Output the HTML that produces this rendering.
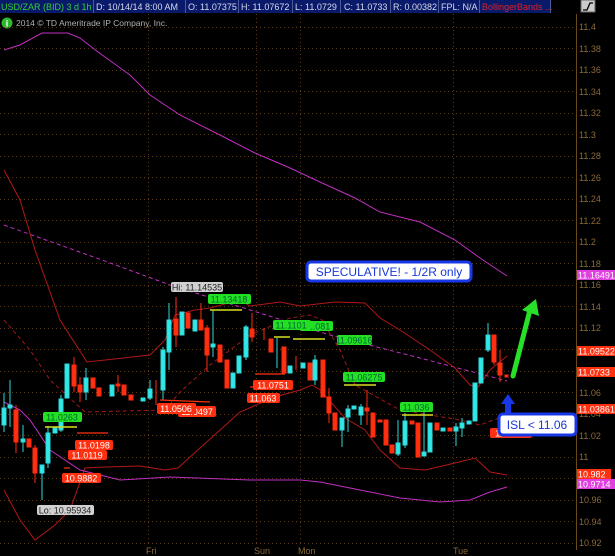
<!DOCTYPE html>
<html><head><meta charset="utf-8"><style>
html,body{margin:0;padding:0;background:#000;width:615px;height:556px;overflow:hidden}
svg{display:block;font-family:"Liberation Sans",sans-serif}
</style></head><body>
<svg width="615" height="556" viewBox="0 0 615 556" xmlns="http://www.w3.org/2000/svg">
<rect width="615" height="556" fill="#000"/>
<!-- top bar -->
<rect x="0" y="0" width="550" height="13" fill="#0a1a6a"/>
<g stroke="#4a5a9a" stroke-width="1">
<line x1="93.5" y1="0" x2="93.5" y2="13"/><line x1="185.5" y1="0" x2="185.5" y2="13"/><line x1="238.5" y1="0" x2="238.5" y2="13"/><line x1="292.5" y1="0" x2="292.5" y2="13"/><line x1="340.5" y1="0" x2="340.5" y2="13"/><line x1="390.5" y1="0" x2="390.5" y2="13"/><line x1="438.5" y1="0" x2="438.5" y2="13"/><line x1="479.5" y1="0" x2="479.5" y2="13"/><line x1="550.5" y1="0" x2="550.5" y2="13"/>
</g>
<g font-size="9" fill="#d8d8e8">
<text x="1" y="10" fill="#30d030">USD/ZAR (BID) 3 d 1h</text>
<text x="96" y="10">D: 10/14/14 8:00 AM</text>
<text x="188" y="10">O: 11.07375</text>
<text x="241" y="10">H: 11.07672</text>
<text x="295" y="10">L: 11.0729</text>
<text x="344" y="10">C: 11.0733</text>
<text x="393" y="10">R: 0.00382</text>
<text x="441" y="10">FPL: N/A</text>
<text x="482" y="10" fill="#e02020">BollingerBands ...</text>
</g>
<rect x="581" y="0" width="14" height="12" fill="#ccc" stroke="#666"/>
<path d="M583 10 L587 10 L590 3 L593 3" stroke="#000" fill="none" stroke-width="1.3"/>
<circle cx="7" cy="23" r="5.5" fill="#2db82d"/><text x="7" y="26.5" font-size="9" fill="#fff" text-anchor="middle" font-weight="bold">i</text>
<text x="16" y="26" font-size="8.5" fill="#b0b0b0">2014 © TD Ameritrade IP Company, Inc.</text>
<!-- grid -->
<g stroke="#5a3c10" stroke-width="1" stroke-dasharray="1,3">
<line x1="0" x2="575" y1="27.5" y2="27.5"/><line x1="0" x2="575" y1="48.5" y2="48.5"/><line x1="0" x2="575" y1="70.5" y2="70.5"/><line x1="0" x2="575" y1="91.5" y2="91.5"/><line x1="0" x2="575" y1="113.5" y2="113.5"/><line x1="0" x2="575" y1="134.5" y2="134.5"/><line x1="0" x2="575" y1="156.5" y2="156.5"/><line x1="0" x2="575" y1="177.5" y2="177.5"/><line x1="0" x2="575" y1="199.5" y2="199.5"/><line x1="0" x2="575" y1="220.5" y2="220.5"/><line x1="0" x2="575" y1="242.5" y2="242.5"/><line x1="0" x2="575" y1="263.5" y2="263.5"/><line x1="0" x2="575" y1="285.5" y2="285.5"/><line x1="0" x2="575" y1="306.5" y2="306.5"/><line x1="0" x2="575" y1="328.5" y2="328.5"/><line x1="0" x2="575" y1="349.5" y2="349.5"/><line x1="0" x2="575" y1="371.5" y2="371.5"/><line x1="0" x2="575" y1="392.5" y2="392.5"/><line x1="0" x2="575" y1="414.5" y2="414.5"/><line x1="0" x2="575" y1="435.5" y2="435.5"/><line x1="0" x2="575" y1="457.5" y2="457.5"/><line x1="0" x2="575" y1="478.5" y2="478.5"/><line x1="0" x2="575" y1="500.5" y2="500.5"/><line x1="0" x2="575" y1="521.5" y2="521.5"/><line x1="0" x2="575" y1="543.5" y2="543.5"/>
<line x1="148.5" x2="148.5" y1="14" y2="545"/><line x1="256.5" x2="256.5" y1="14" y2="545"/><line x1="300.5" x2="300.5" y1="14" y2="545"/><line x1="453.5" x2="453.5" y1="14" y2="545"/>
</g>
<line x1="576.5" y1="14" x2="576.5" y2="550" stroke="#6a4a18"/>
<g font-size="9" fill="#8a6a38">
<text x="579" y="30">11.4</text><text x="579" y="52">11.38</text><text x="579" y="73">11.36</text><text x="579" y="95">11.34</text><text x="579" y="116">11.32</text><text x="579" y="138">11.3</text><text x="579" y="159">11.28</text><text x="579" y="181">11.26</text><text x="579" y="202">11.24</text><text x="579" y="224">11.22</text><text x="579" y="245">11.2</text><text x="579" y="267">11.18</text><text x="579" y="288">11.16</text><text x="579" y="310">11.14</text><text x="579" y="331">11.12</text><text x="579" y="353">11.1</text><text x="579" y="374">11.08</text><text x="579" y="396">11.06</text><text x="579" y="417">11.04</text><text x="579" y="439">11.02</text><text x="579" y="460">11</text><text x="579" y="482">10.98</text><text x="579" y="503">10.96</text><text x="579" y="525">10.94</text><text x="579" y="546">10.92</text>
<text x="146" y="554">Fri</text><text x="254" y="554">Sun</text><text x="298" y="554">Mon</text><text x="453" y="554">Tue</text>
</g>
<!-- bands -->
<g fill="none" stroke-width="1">
<polyline stroke="#c030c0" points="4,50 20,45 42,33 68,33 80,38 98,52 130,75 150,95 180,115 220,135 255,153 290,168 320,182 355,198 380,212 420,222 455,240 480,258 507,276"/>
<polyline stroke="#c030c0" stroke-dasharray="4,3" points="4,225 60,245 102,260 170,285 250,310 330,335 420,358 507,381"/>
<polyline stroke="#b01818" points="4,170 20,200 35,250 60,320 87,362 150,355 165,340 175,315 195,310 210,308 240,300 250,306 280,302 300,306 335,302 365,303 380,318 400,330 430,350 455,368 470,385 478,387 490,370 507,356"/>
<polyline stroke="#b01818" points="4,490 20,520 35,540 55,525 70,510 85,468 105,467 140,466 165,470 178,468 200,448 240,412 275,397 300,390 312,385 320,390 345,418 365,430 380,450 400,468 425,470 455,463 475,458 490,472 507,475"/>
<polyline stroke="#c030c0" points="4,402 20,410 30,420 50,450 80,470 120,480 170,477 250,480 300,480 320,482 360,490 400,498 440,502 470,500 490,492 507,487"/>
<polyline stroke="#a01818" stroke-dasharray="4,3" points="4,320 30,350 50,380 85,412 165,410 180,392 210,365 250,335 290,318 310,315 322,320 340,350 355,385 400,410 430,415 460,420 480,425 507,415"/>
</g>
<!-- candles cyan -->
<g stroke="#30d8d8" fill="#30e8e8">
<line x1="4" y1="393" x2="4" y2="432"/><rect x="2" y="408" width="4" height="17"/>
<line x1="10" y1="380" x2="10" y2="427"/><rect x="8" y="405" width="4" height="3"/>
<line x1="23" y1="425" x2="23" y2="452"/><rect x="21" y="439" width="4" height="3"/>
<line x1="42" y1="465" x2="42" y2="500"/><rect x="40" y="465" width="4" height="8"/>
<line x1="48" y1="426" x2="48" y2="468"/><rect x="46" y="433" width="4" height="30"/>
<rect x="53" y="428" width="4" height="5"/>
<line x1="61" y1="395" x2="61" y2="432"/><rect x="59" y="399" width="4" height="31"/>
<rect x="65" y="364" width="4" height="34"/>
<line x1="86" y1="368" x2="86" y2="400"/><rect x="84" y="378" width="4" height="14"/>
<rect x="110" y="385" width="4" height="11"/>
<rect x="141" y="398" width="4" height="3"/>
<line x1="150" y1="380" x2="150" y2="400"/><rect x="148" y="389" width="4" height="9"/>
<line x1="163" y1="347" x2="163" y2="400"/><rect x="161" y="350" width="4" height="40"/>
<line x1="169" y1="303" x2="169" y2="370"/><rect x="167" y="320" width="4" height="32"/>
<rect x="180" y="312" width="4" height="23"/>
<rect x="193" y="320" width="4" height="11"/>
<line x1="213" y1="310" x2="213" y2="357"/><rect x="211" y="344" width="4" height="3"/>
<rect x="231" y="373" width="4" height="15"/>
<rect x="237" y="356" width="4" height="17"/>
<line x1="246" y1="325" x2="246" y2="360"/><rect x="244" y="327" width="4" height="30"/>
<line x1="277" y1="338" x2="277" y2="368"/>
<rect x="288" y="366" width="4" height="7"/>
<rect x="301" y="363" width="4" height="5"/>
<line x1="315" y1="355" x2="315" y2="385"/><rect x="313" y="360" width="4" height="20"/>
<line x1="342" y1="418" x2="342" y2="447"/><rect x="340" y="418" width="4" height="12"/>
<line x1="348" y1="405" x2="348" y2="432"/><rect x="346" y="409" width="4" height="8"/>
<rect x="352" y="406" width="4" height="3"/>
<line x1="361" y1="404" x2="361" y2="425"/><rect x="359" y="407" width="4" height="8"/>
<line x1="398" y1="420" x2="398" y2="456"/><rect x="396" y="443" width="4" height="11"/>
<line x1="405" y1="413" x2="405" y2="448"/><rect x="403" y="421" width="4" height="24"/>
<line x1="424" y1="412" x2="424" y2="456"/><rect x="422" y="452" width="4" height="4"/>
<rect x="428" y="423" width="4" height="29"/>
<rect x="441" y="428" width="4" height="3"/>
<line x1="456" y1="423" x2="456" y2="446"/><rect x="454" y="427" width="4" height="4"/>
<line x1="462" y1="418" x2="462" y2="437"/><rect x="460" y="423" width="4" height="5"/>
<rect x="467" y="421" width="4" height="3"/>
<rect x="473" y="383" width="4" height="38"/>
<rect x="479" y="358" width="4" height="25"/>
<line x1="488" y1="323" x2="488" y2="352"/><rect x="486" y="335" width="4" height="15"/>
</g>
<!-- candles red -->
<g stroke="#ff2a10" fill="#ff3010">
<line x1="16" y1="405" x2="16" y2="453"/><rect x="14" y="410" width="4" height="32"/>
<rect x="27" y="439" width="4" height="8"/>
<line x1="35" y1="445" x2="35" y2="483"/><rect x="33" y="448" width="4" height="25"/>
<line x1="74" y1="357" x2="74" y2="392"/><rect x="72" y="365" width="4" height="21"/>
<line x1="80" y1="377" x2="80" y2="402"/><rect x="78" y="385" width="4" height="7"/>
<rect x="91" y="378" width="4" height="10"/>
<rect x="97" y="388" width="4" height="8"/>
<line x1="118" y1="375" x2="118" y2="392"/><rect x="116" y="384" width="4" height="2"/>
<rect x="122" y="385" width="4" height="10"/>
<rect x="129" y="395" width="4" height="5"/>
<line x1="156" y1="380" x2="156" y2="405"/>
<line x1="176" y1="297" x2="176" y2="347"/><rect x="174" y="319" width="4" height="16"/>
<rect x="186" y="313" width="4" height="15"/>
<line x1="201" y1="303" x2="201" y2="330"/><rect x="199" y="320" width="4" height="10"/>
<line x1="207" y1="325" x2="207" y2="372"/><rect x="205" y="328" width="4" height="27"/>
<rect x="218" y="345" width="4" height="17"/>
<rect x="225" y="360" width="4" height="28"/>
<line x1="252" y1="313" x2="252" y2="342"/><rect x="250" y="329" width="4" height="8"/>
<line x1="264" y1="328" x2="264" y2="340"/>
<rect x="269" y="339" width="4" height="13"/>
<rect x="282" y="347" width="4" height="26"/>
<line x1="296" y1="356" x2="296" y2="370"/>
<rect x="308" y="363" width="4" height="17"/>
<rect x="321" y="360" width="4" height="37"/>
<line x1="329" y1="388" x2="329" y2="423"/><rect x="327" y="397" width="4" height="16"/>
<rect x="333" y="413" width="4" height="17"/>
<line x1="367" y1="390" x2="367" y2="425"/><rect x="365" y="408" width="4" height="3"/>
<rect x="371" y="413" width="4" height="24"/>
<rect x="378" y="420" width="4" height="2"/>
<rect x="384" y="420" width="4" height="25"/>
<rect x="390" y="445" width="4" height="8"/>
<rect x="410" y="421" width="4" height="3"/>
<rect x="416" y="423" width="4" height="34"/>
<rect x="435" y="423" width="4" height="7"/>
<rect x="448" y="428" width="4" height="3"/>
<line x1="494" y1="335" x2="494" y2="365"/><rect x="492" y="335" width="4" height="27"/>
<line x1="500" y1="350" x2="500" y2="382"/><rect x="498" y="363" width="4" height="12"/>
<rect x="505" y="375" width="3" height="2"/>
</g>
<!-- yellow lines -->
<g stroke="#d8e020" stroke-width="1.5">
<line x1="45" y1="427" x2="77" y2="427"/><line x1="210" y1="310" x2="242" y2="310"/><line x1="274" y1="337" x2="290" y2="337"/><line x1="293" y1="339" x2="325" y2="339"/><line x1="344" y1="385" x2="376" y2="385"/><line x1="402" y1="415" x2="433" y2="415"/>
</g>
<g stroke="#ff3010" stroke-width="1.2">
<line x1="77" y1="433" x2="108" y2="433"/><line x1="64" y1="468" x2="70" y2="468"/><line x1="160" y1="400" x2="210" y2="402"/><line x1="255" y1="374" x2="285" y2="374"/><line x1="250" y1="387" x2="256" y2="387"/>
</g>
<!-- labels -->
<g font-size="9" text-anchor="middle">
<rect x="171" y="282" width="52" height="10" rx="2" fill="#d0d0d0"/><text x="197" y="290.5" fill="#222">Hi: 11.14535</text>
<rect x="37" y="505" width="57" height="10" rx="2" fill="#d0d0d0"/><text x="65" y="513.5" fill="#222">Lo: 10.95934</text>
<rect x="208" y="294" width="43" height="10" rx="2" fill="#22e022"/><text x="229" y="302.5" fill="#063">11.13418</text>
<rect x="300" y="321" width="33" height="10" rx="2" fill="#22e022"/><text x="319" y="329.5" fill="#063">1.081</text>
<rect x="273" y="320" width="38" height="10" rx="2" fill="#22e022"/><text x="291" y="328.5" fill="#063">11.1101</text>
<rect x="337" y="335" width="35" height="10" rx="2" fill="#22e022"/><text x="354" y="343.5" fill="#063">11.09616</text>
<rect x="343" y="372" width="42" height="10" rx="2" fill="#22e022"/><text x="364" y="380.5" fill="#063">11.06275</text>
<rect x="400" y="402" width="33" height="10" rx="2" fill="#22e022"/><text x="416" y="410.5" fill="#063">11.036</text>
<rect x="43" y="412" width="39" height="10" rx="2" fill="#22e022"/><text x="62" y="420.5" fill="#063">11.0263</text>
<g fill="#fff">
<rect x="178" y="406" width="38" height="11" rx="2" fill="#ff3010"/><text x="197" y="415">11.0497</text>
<rect x="157" y="403" width="39" height="11" rx="2" fill="#ff3010"/><text x="176" y="412">11.0506</text>
<rect x="75" y="440" width="38" height="10" rx="2" fill="#ff3010"/><text x="94" y="448.5">11.0198</text>
<rect x="68" y="450" width="39" height="10" rx="2" fill="#ff3010"/><text x="87" y="458.5">11.0119</text>
<rect x="62" y="473" width="39" height="10" rx="2" fill="#ff3010"/><text x="81" y="481.5">10.9882</text>
<rect x="253" y="380" width="40" height="10" rx="2" fill="#ff3010"/><text x="273" y="388.5">11.0751</text>
<rect x="247" y="393" width="33" height="10" rx="2" fill="#ff3010"/><text x="263" y="401.5">11.063</text>
<rect x="490" y="428" width="42" height="10" rx="2" fill="#ff3010"/><text x="511" y="436.5">11.0346</text>
</g>
<!-- axis tags -->
<g text-anchor="start" fill="#fff">
<rect x="577" y="270" width="38" height="10" fill="#e040e0"/><text x="578" y="278.5">11.16491</text>
<rect x="577" y="346" width="38" height="10" fill="#ff3010"/><text x="578" y="354.5">11.09522</text>
<rect x="577" y="367" width="38" height="10" fill="#ff3010"/><text x="578" y="375.5">11.0733</text>
<rect x="577" y="404" width="38" height="10" fill="#ff3010"/><text x="578" y="412.5">11.03861</text>
<rect x="577" y="469" width="34" height="10" fill="#ff3010"/><text x="578" y="477.5">10.982</text>
<rect x="577" y="479" width="38" height="10" fill="#e040e0"/><text x="578" y="487.5">10.9714</text>
</g>
</g>
<!-- annotation boxes -->
<rect x="307" y="262" width="164" height="19" rx="4" fill="#fff" stroke="#1838e8" stroke-width="3"/>
<text x="389" y="276" font-size="12" fill="#1838d8" text-anchor="middle">SPECULATIVE! - 1/2R only</text>
<rect x="499" y="414" width="77" height="21" rx="4" fill="#fff" stroke="#1838e8" stroke-width="3"/>
<text x="537" y="429" font-size="12" fill="#1838d8" text-anchor="middle">ISL &lt; 11.06</text>
<path d="M505 413 L505 404 L501 404 L508 394 L515 404 L511 404 L511 413 Z" fill="#1838e8"/>
<path d="M513 376 L530 310" stroke="#28e028" stroke-width="5" stroke-linecap="round"/>
<path d="M522 310 L536 299 L539 316 Z" fill="#28e028"/>
</svg>
</body></html>
